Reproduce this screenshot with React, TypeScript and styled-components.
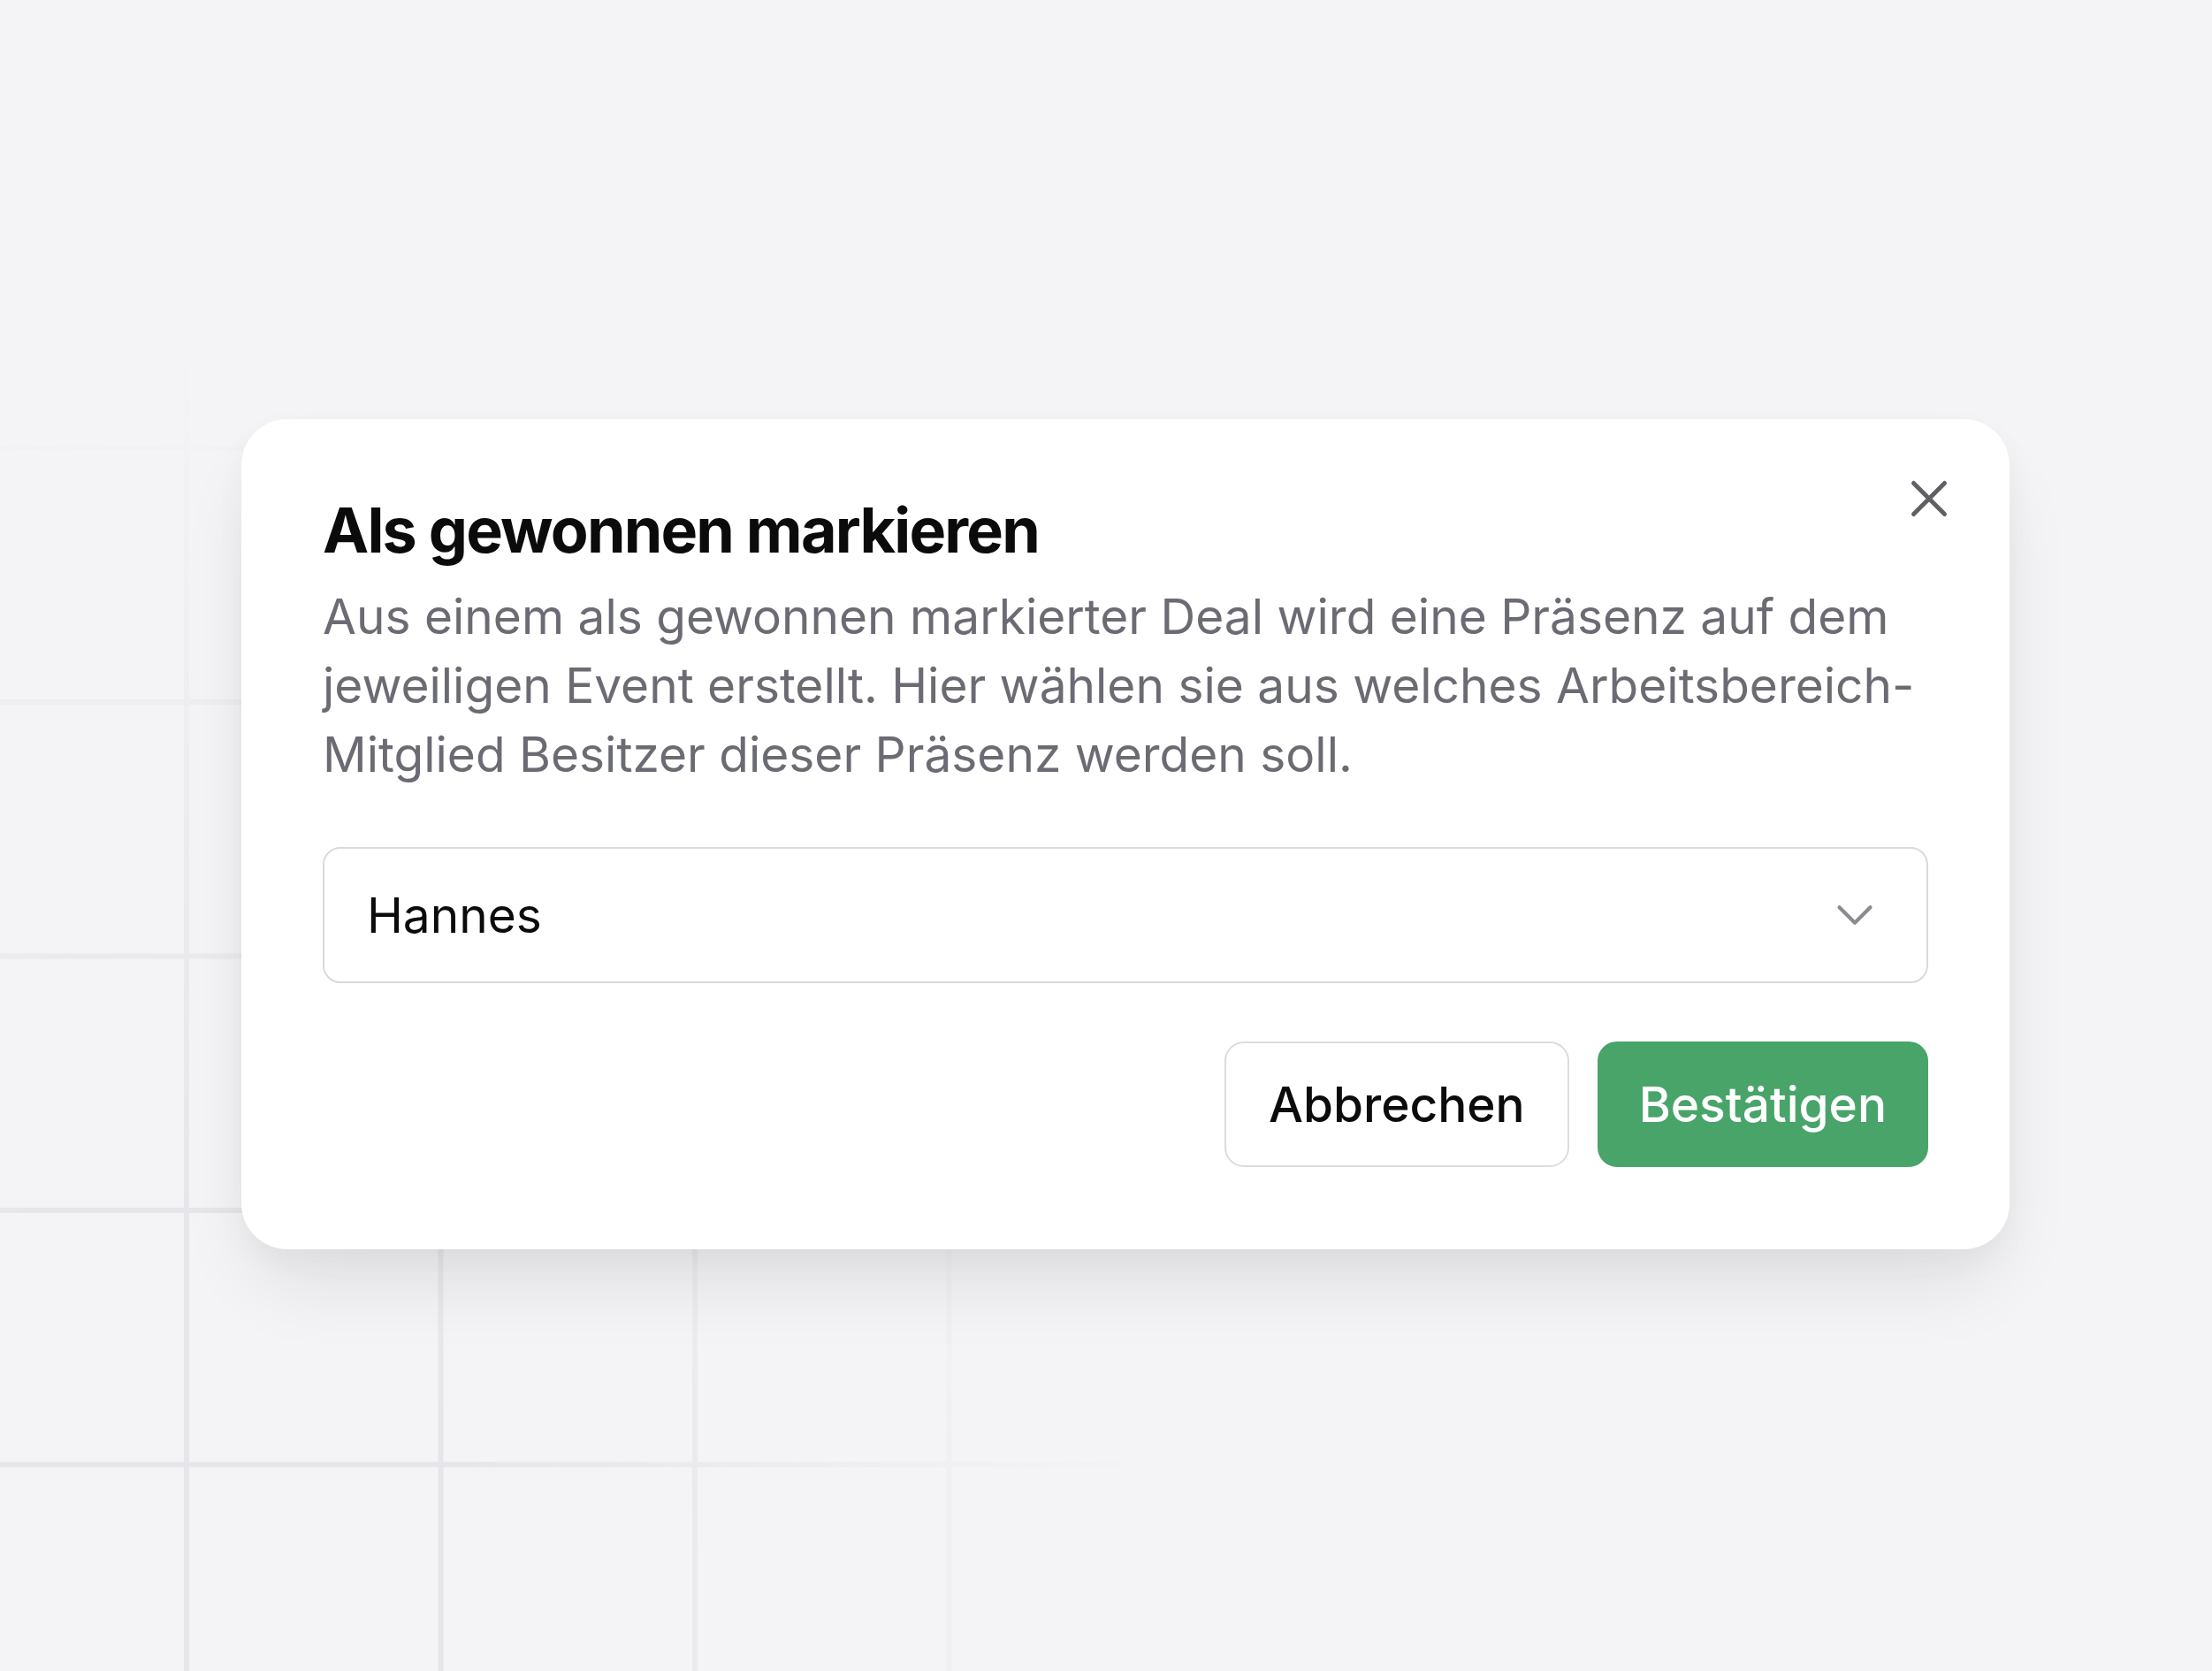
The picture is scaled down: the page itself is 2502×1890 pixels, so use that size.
import React from "react";
import styled, { createGlobalStyle } from "styled-components";

const GlobalStyle = createGlobalStyle`
  * { box-sizing: border-box; }
  html, body { margin: 0; padding: 0; background: #f4f4f6; }
  body { font-family: Inter, "Noto Sans", "Liberation Sans", sans-serif; -webkit-font-smoothing: antialiased; }
`;

const Page = styled.div`
  position: relative;
  width: 2502px;
  height: 1890px;
  overflow: hidden;
  background: #f4f4f6;
  padding: 474px 0 0 273px;

  &::before {
    content: "";
    position: absolute;
    inset: 0;
    background-image:
      linear-gradient(to right, #e6e6ea 0, #e6e6ea 6px, transparent 6px),
      linear-gradient(to bottom, #e6e6ea 0, #e6e6ea 6px, transparent 6px);
    background-size: 287.5px 287.5px;
    background-position: 208px 216px;
    -webkit-mask-image: radial-gradient(ellipse 1150px 1500px at 150px 1890px, #000 35%, transparent 100%);
    mask-image: radial-gradient(ellipse 1150px 1500px at 150px 1890px, #000 35%, transparent 100%);
    pointer-events: none;
  }
`;

const Dialog = styled.div`
  position: relative;
  z-index: 1;
  width: 2000px;
  background: #ffffff;
  border-radius: 52px;
  padding: 91px 92px 93px;
  display: flex;
  flex-direction: column;
  box-shadow: 0 50px 90px -20px rgba(20, 20, 40, 0.1), 0 12px 36px rgba(20, 20, 40, 0.035);
`;

const Header = styled.div`
  display: flex;
  flex-direction: column;
  gap: 23px;
`;

const Title = styled.h2`
  margin: 0;
  font-size: 70px;
  line-height: 70px;
  font-weight: 700;
  letter-spacing: -0.026em;
  color: #0b0b0c;
`;

const Description = styled.p`
  margin: 0;
  font-size: 55px;
  line-height: 78px;
  font-weight: 400;
  color: #6b6b73;
`;

const SelectTrigger = styled.button`
  margin-top: 66px;
  height: 154px;
  width: 100%;
  display: flex;
  align-items: center;
  justify-content: space-between;
  padding: 0 46px 0 48px;
  background: #ffffff;
  border: 2px solid #d9d9de;
  border-radius: 20px;
  font-family: inherit;
  font-size: 55px;
  color: #0b0b0c;
  cursor: pointer;
`;

const Footer = styled.div`
  margin-top: 66px;
  display: flex;
  justify-content: flex-end;
  gap: 32px;
`;

const Button = styled.button<{ $primary?: boolean }>`
  height: 142px;
  padding: 0 ${(p) => (p.$primary ? "45px" : "48px")};
  border-radius: 22px;
  font-family: inherit;
  font-size: 55px;
  font-weight: 500;
  cursor: pointer;
  border: ${(p) => (p.$primary ? "2px solid #49a46a" : "2px solid #dcdce0")};
  background: ${(p) => (p.$primary ? "#49a46a" : "#ffffff")};
  color: ${(p) => (p.$primary ? "#ffffff" : "#0b0b0c")};
`;

const CloseButton = styled.button`
  position: absolute;
  top: 55px;
  right: 56px;
  width: 70px;
  height: 70px;
  padding: 0;
  border: none;
  background: transparent;
  color: #5f5f66;
  display: flex;
  align-items: center;
  justify-content: center;
  cursor: pointer;
`;

const Icon = ({ d, size, stroke, color }: { d: string; size: number; stroke: number; color?: string }) => (
  <svg width={size} height={size} viewBox="0 0 24 24" fill="none" stroke={color ?? "currentColor"} strokeWidth={stroke} strokeLinecap="round" strokeLinejoin="round">
    <path d={d} />
  </svg>
);

export default function App() {
  return (
    <>
      <GlobalStyle />
      <Page>
        <Dialog role="dialog">
          <Header>
            <Title>Als gewonnen markieren</Title>
            <Description>
              Aus einem als gewonnen markierter Deal wird eine Präsenz auf dem jeweiligen Event erstellt. Hier wählen sie aus welches Arbeitsbereich-Mitglied Besitzer dieser Präsenz werden soll.
            </Description>
          </Header>
          <SelectTrigger type="button">
            <span>Hannes</span>
            <Icon d="m6 9 6 6 6-6" size={70} stroke={1.4} color="#8a8a90" />
          </SelectTrigger>
          <Footer>
            <Button type="button">Abbrechen</Button>
            <Button type="button" $primary>Bestätigen</Button>
          </Footer>
          <CloseButton type="button" aria-label="Schließen">
            <Icon d="M18 6 6 18M6 6l12 12" size={70} stroke={1.7} />
          </CloseButton>
        </Dialog>
      </Page>
    </>
  );
}
